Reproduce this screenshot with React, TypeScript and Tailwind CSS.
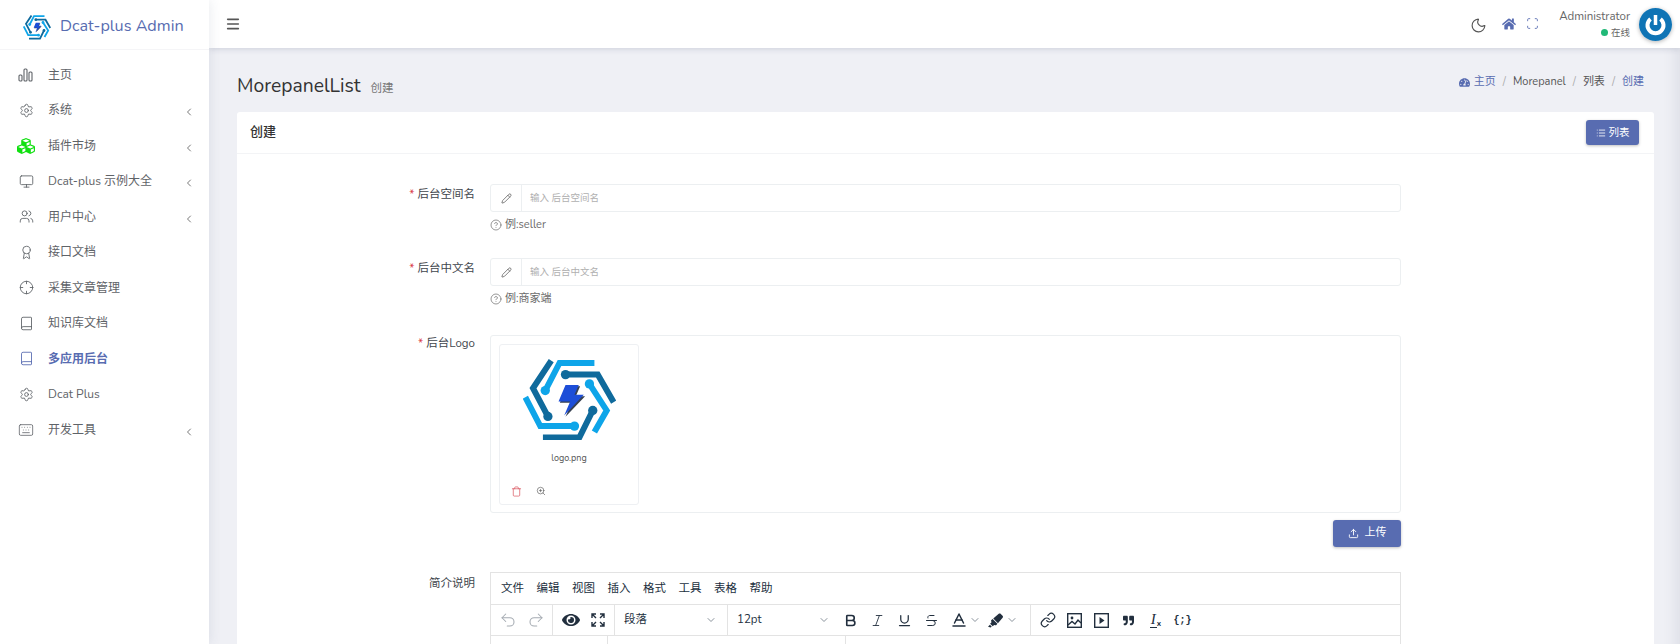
import React from "react";
import {
  Award,
  Baseline,
  Bold,
  Book,
  ChevronDown,
  ChevronLeft,
  CircleHelp,
  Crosshair,
  Italic,
  Keyboard,
  Link,
  List,
  Menu,
  Monitor,
  Moon,
  Pencil,
  Redo2,
  Scan,
  Settings,
  Strikethrough,
  Trash,
  Underline,
  Undo2,
  Upload,
  Users,
  ZoomIn,
} from "lucide-react";
import {
  FaCubes,
  FaEye,
  FaHighlighter,
  FaHome,
  FaQuoteRight,
  FaTachometerAlt,
} from "react-icons/fa";

const FONT = "font-['Nunito','Noto_Sans','Noto_Sans_CJK_SC',sans-serif]";

const Logo = ({ size }: { size: number }) => (
  <svg width={size} height={size * 0.875} viewBox="130 70 280 245" fill="none">
    <g strokeWidth="18" fill="none">
      <path d="M215 75 L160 158 L205 243" stroke="#0f6a9c" />
      <path d="M345 82 L240 82 L197 165" stroke="#0ea5e9" />
      <path d="M258 117 L355 117 L403 200" stroke="#0f6a9c" />
      <path d="M330 145 L382 225 L345 290" stroke="#0ea5e9" />
      <path d="M190 306 L300 306 L340 225" stroke="#0f6a9c" />
      <path d="M285 272 L182 272 L137 185" stroke="#0ea5e9" />
    </g>
    <circle cx="205" cy="243" r="14" fill="#0f6a9c" />
    <circle cx="197" cy="165" r="14" fill="#0ea5e9" />
    <circle cx="258" cy="117" r="14" fill="#0f6a9c" />
    <circle cx="330" cy="145" r="14" fill="#0ea5e9" />
    <circle cx="340" cy="225" r="14" fill="#0f6a9c" />
    <circle cx="285" cy="272" r="14" fill="#0ea5e9" />
    <path d="M262 152 L302 152 L289 182 L317 182 L258 244 L276 202 L241 202Z" fill="#374151" />
    <path d="M258 148 L298 148 L285 178 L313 178 L254 240 L272 198 L237 198Z" fill="#1d4ed8" />
  </svg>
);

const BarsIcon = () => (
  <svg width="16" height="16" viewBox="0 0 16 16" fill="none" stroke="currentColor" strokeWidth="1.1">
    <rect x="1" y="8" width="3" height="6" rx="1" />
    <rect x="6" y="2" width="3" height="12" rx="1" />
    <rect x="11" y="5" width="3" height="9" rx="1" />
  </svg>
);

const FullscreenIcon = () => (
  <svg width="14" height="14" viewBox="0 0 14 14" fill="none" stroke="currentColor" strokeWidth="1.4">
    <path d="M1 5 V1 H5 M1 1 L5 5" />
    <path d="M9 1 H13 V5 M13 1 L9 5" />
    <path d="M1 9 V13 H5 M1 13 L5 9" />
    <path d="M9 13 H13 V9 M13 13 L9 9" />
  </svg>
);

const PictureIcon = () => (
  <svg width="15" height="15" viewBox="0 0 15 15" fill="none" stroke="currentColor" strokeWidth="1.4">
    <rect x="0.7" y="0.7" width="13.6" height="13.6" />
    <circle cx="5" cy="5" r="1.4" fill="currentColor" stroke="none" />
    <path d="M1 12 L5 8.5 L8 11 L11 7 L14 10" />
  </svg>
);

const VideoIcon = () => (
  <svg width="15" height="15" viewBox="0 0 15 15" fill="none" stroke="currentColor" strokeWidth="1.4">
    <rect x="0.7" y="0.7" width="13.6" height="13.6" />
    <path d="M5.5 4 L10.5 7.5 L5.5 11Z" fill="currentColor" stroke="none" />
  </svg>
);

const menus = [
  { label: "主页", icon: <BarsIcon /> },
  { label: "系统", icon: <Settings size={15} strokeWidth={1.4} />, arrow: true },
  { label: "插件市场", icon: <FaCubes size={18} className="text-[#10e010]" />, arrow: true },
  { label: "Dcat-plus 示例大全", icon: <Monitor size={15} strokeWidth={1.4} />, arrow: true },
  { label: "用户中心", icon: <Users size={15} strokeWidth={1.4} />, arrow: true },
  { label: "接口文档", icon: <Award size={15} strokeWidth={1.4} /> },
  { label: "采集文章管理", icon: <Crosshair size={15} strokeWidth={1.4} /> },
  { label: "知识库文档", icon: <Book size={15} strokeWidth={1.4} /> },
  { label: "多应用后台", icon: <Book size={15} strokeWidth={1.4} />, active: true },
  { label: "Dcat Plus", icon: <Settings size={15} strokeWidth={1.4} /> },
  { label: "开发工具", icon: <Keyboard size={16} strokeWidth={1.2} />, arrow: true },
];

const Sidebar = () => (
  <aside className="w-[209px] shrink-0 h-full bg-white z-20 shadow-[0_0_12px_rgba(60,70,110,0.12)]">
    <div className="h-[50px] flex items-center pt-[4px] pl-[23px] gap-[9px] border-b border-[#f5f5f7]">
      <span className="mt-[2px]">
        <Logo size={28} />
      </span>
      <span className="text-[16.2px] text-[#586cb1]">Dcat-plus Admin</span>
    </div>
    <div className="pt-[7px]">
      {menus.map((m) => (
        <div
          key={m.label}
          className={`h-[35.5px] flex items-center text-[12px] ${m.active ? "text-[#586cb1] font-bold" : "text-[#5f6368]"}`}
        >
          <span className="w-[48px] shrink-0 flex justify-center pl-[8px] pr-[4px]">{m.icon}</span>
          <span className="flex-1">{m.label}</span>
          {m.arrow && <ChevronLeft size={12} strokeWidth={1.6} className="mr-[14px] mt-[4px] text-[#555]" />}
        </div>
      ))}
    </div>
  </aside>
);

const Header = () => (
  <div className="h-[48px] shrink-0 bg-white flex items-center pl-[16px] pr-[8px] shadow-[0_1px_6px_rgba(60,70,110,0.18)] z-10">
    <Menu size={16} strokeWidth={2.4} className="text-[#555]" />
    <div className="flex-1" />
    <Moon size={17} strokeWidth={1.6} className="text-[#555] mt-[2px]" />
    <FaHome size={14} className="text-[#586cb1] ml-[15px] mb-[1px]" />
    <Scan size={13} strokeWidth={1.6} className="text-[#586cb1] ml-[10px] mb-[1px]" />
    <div className="ml-[20px] flex flex-col items-end leading-none">
      <span className="text-[11.5px] text-[#666]">Administrator</span>
      <span className="mt-[5px] flex items-center text-[9.5px] text-[#666]">
        <span className="w-[7px] h-[7px] rounded-full bg-[#21b978] mr-[3px]" />
        在线
      </span>
    </div>
    <div className="ml-[9px] rounded-full shadow-[0_1px_4px_rgba(0,0,0,0.3)]">
      <svg width="33" height="33" viewBox="0 0 33 33" className="block">
        <circle cx="16.5" cy="16.5" r="16.5" fill="#0f74b5" />
        <path d="M11.5 11 A8 8 0 1 0 21.5 11" stroke="#fff" strokeWidth="4" fill="none" />
        <path d="M16.5 7 V17" stroke="#fff" strokeWidth="3.5" />
      </svg>
    </div>
  </div>
);

const Field = ({
  label,
  placeholder,
  help,
  height,
}: {
  label: string;
  placeholder: string;
  help: string;
  height: string;
}) => (
  <div className={`flex ${height}`}>
    <label className="w-[238px] text-right text-[11.5px] text-[#3f464d] leading-[20px]">
      <span className="text-[#d9363e] mr-[3px]">*</span>
      {label}
    </label>
    <div className="ml-[15px] w-[911px]">
      <div className="h-[28px] flex border border-[#eceff1] rounded-[3px]">
        <span className="w-[31px] flex items-center justify-center border-r border-[#eceff1] text-[#555]">
          <Pencil size={11} strokeWidth={1.6} />
        </span>
        <span className="pl-[8px] text-[9.5px] leading-[26px] text-[#b0b0b0]">{placeholder}</span>
      </div>
      <div className="mt-[6px] flex items-center text-[11px] text-[#6b6b6b] leading-[14px]">
        <CircleHelp size={12} strokeWidth={1.4} className="mr-[3px]" />
        {help}
      </div>
    </div>
  </div>
);

const UploadBox = () => (
  <div className="h-[178px] border border-[#eceff1] rounded-[3px] pt-[8px] pl-[8px]">
    <div className="w-[140px] h-[161px] border border-[#eef0f3] rounded-[3px] flex flex-col items-center">
      <div className="mt-[14px]">
        <Logo size={93} />
      </div>
      <span className="mt-[12px] text-[9px] text-[#555]">logo.png</span>
      <div className="w-full flex items-center pl-[11px] mt-[20px] gap-[14px]">
        <Trash size={11} strokeWidth={1.5} className="text-[#d9505a]" />
        <ZoomIn size={10} strokeWidth={1.5} className="text-[#555]" />
      </div>
    </div>
  </div>
);

const Divider = () => <span className="self-stretch w-px bg-[#e3e3e3]" />;

const Tool = ({ children }: { children: React.ReactNode }) => (
  <span className="w-[27px] flex items-center justify-center">{children}</span>
);

const tools = ["文件", "编辑", "视图", "插入", "格式", "工具", "表格", "帮助"];

const Editor = () => (
  <div className="border border-[#e3e3e3] text-[#222f3e]">
    <div className="h-[32px] flex items-center pl-[10px] gap-[12.5px] text-[11.5px] border-b border-[#e3e3e3]">
      {tools.map((t) => (
        <span key={t}>{t}</span>
      ))}
    </div>
    <div className="h-[31px] flex items-center border-b border-[#e3e3e3]">
      <div className="w-[61px] flex items-center justify-center gap-[10px] text-[#a5abb2]">
        <Undo2 size={18} strokeWidth={1.4} />
        <Redo2 size={18} strokeWidth={1.4} />
      </div>
      <Divider />
      <div className="w-[61px] flex items-center justify-center gap-[11px]">
        <FaEye size={18} />
        <FullscreenIcon />
      </div>
      <Divider />
      <div className="w-[112px] flex items-center justify-between pl-[9px] pr-[10px] text-[11.5px]">
        段落
        <ChevronDown size={12} className="text-[#8a939c]" />
      </div>
      <Divider />
      <div className="w-[112px] flex items-center justify-between pl-[9px] pr-[10px] text-[11.5px]">
        12pt
        <ChevronDown size={12} className="text-[#8a939c]" />
      </div>
      <div className="w-[193px] -ml-[3px] flex items-center">
        <Tool>
          <Bold size={15} strokeWidth={2.6} />
        </Tool>
        <Tool>
          <Italic size={15} strokeWidth={1.4} />
        </Tool>
        <Tool>
          <Underline size={15} strokeWidth={2} />
        </Tool>
        <Tool>
          <Strikethrough size={15} strokeWidth={1.6} />
        </Tool>
        <span className="flex items-center gap-[1px] ml-[5px]">
          <Baseline size={18} strokeWidth={2} />
          <ChevronDown size={12} className="text-[#8a939c]" />
        </span>
        <span className="flex items-center gap-[3px] ml-[7px]">
          <FaHighlighter size={15} />
          <ChevronDown size={12} className="text-[#8a939c]" />
        </span>
      </div>
      <Divider />
      <div className="flex items-center pl-[3px]">
        <Tool>
          <Link size={16} strokeWidth={1.8} />
        </Tool>
        <Tool>
          <PictureIcon />
        </Tool>
        <Tool>
          <VideoIcon />
        </Tool>
        <Tool>
          <FaQuoteRight size={11} />
        </Tool>
        <Tool>
          <span className="flex items-end leading-none">
            <span className="text-[15px] italic font-['Liberation_Serif'] border-b border-[#222f3e] px-[1px]">I</span>
            <span className="text-[8px] font-bold">x</span>
          </span>
        </Tool>
        <Tool>
          <span className="text-[10px] font-bold font-['Liberation_Mono']">{"{;}"}</span>
        </Tool>
      </div>
    </div>
    <div className="h-[40px] flex">
      <div className="w-[117px] border-r border-[#e3e3e3]" />
      <div className="w-[238px] border-r border-[#e3e3e3]" />
    </div>
  </div>
);

export default function App() {
  return (
    <div className={`${FONT} h-[644px] w-[1680px] overflow-hidden flex bg-[#eff0f5]`}>
      <Sidebar />
      <main className="flex-1 min-w-0 flex flex-col">
        <Header />
        <div className="flex-1 pl-[28px] pr-[26px] pt-[25px] shadow-[inset_-14px_0_14px_-10px_rgba(60,70,110,0.10)]">
          <div className="h-[39px] flex items-start justify-between">
            <div className="flex items-baseline">
              <span className="text-[19.3px] text-[#333] leading-[26px]">MorepanelList</span>
              <span className="ml-[10px] text-[11.5px] text-[#777]">创建</span>
            </div>
            <div className="flex items-center text-[11px] text-[#555] pr-[10px] pt-[1px]">
              <FaTachometerAlt size={11} className="text-[#586cb1] mr-[4px]" />
              <span className="text-[#586cb1]">主页</span>
              <span className="mx-[7px] text-[#aaa]">/</span>
              <span>Morepanel</span>
              <span className="mx-[7px] text-[#aaa]">/</span>
              <span>列表</span>
              <span className="mx-[7px] text-[#aaa]">/</span>
              <span className="text-[#586cb1]">创建</span>
            </div>
          </div>
          <div className="bg-white rounded-[3px]">
            <div className="h-[42px] flex items-center justify-between pl-[13px] pr-[15px] border-b border-[#f3f4f6]">
              <span className="text-[13px] font-medium text-[#333]">创建</span>
              <button className="w-[53px] h-[25px] rounded-[3px] bg-[#586cb1] text-white text-[10.5px] flex items-center justify-center gap-[3px] shadow-[0_1px_3px_rgba(0,0,0,0.25)]">
                <List size={10} />
                列表
              </button>
            </div>
            <div className="pt-[30px]">
              <Field label="后台空间名" placeholder="输入 后台空间名" help="例:seller" height="h-[74px]" />
              <Field label="后台中文名" placeholder="输入 后台中文名" help="例:商家端" height="h-[75px]" />
              <div className="flex mt-[2px]">
                <label className="w-[238px] text-right text-[11.5px] text-[#3f464d] leading-[16px]">
                  <span className="text-[#d9363e] mr-[3px]">*</span>
                  后台Logo
                </label>
                <div className="ml-[15px] w-[911px]">
                  <UploadBox />
                  <div className="flex justify-end mt-[7px]">
                    <button className="w-[68px] h-[27px] rounded-[3px] bg-[#586cb1] text-white text-[11px] flex items-center justify-center gap-[6px] shadow-[0_1px_3px_rgba(0,0,0,0.25)]">
                      <Upload size={11} />
                      上传
                    </button>
                  </div>
                </div>
              </div>
              <div className="flex mt-[25px]">
                <label className="w-[238px] text-right text-[11.5px] text-[#3f464d] leading-[22px]">
                  简介说明
                </label>
                <div className="ml-[15px] w-[911px]">
                  <Editor />
                </div>
              </div>
            </div>
          </div>
        </div>
      </main>
    </div>
  );
}
